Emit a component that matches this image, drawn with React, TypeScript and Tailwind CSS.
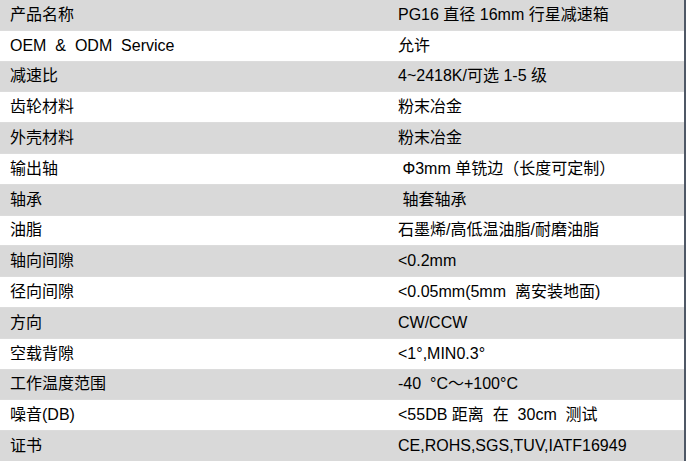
const ROWS: [string, string][] = [
  ["产品名称", "PG16 直径 16mm 行星减速箱"],
  ["OEM  &  ODM  Service", "允许"],
  ["减速比", "4~2418K/可选 1-5 级"],
  ["齿轮材料", "粉末冶金"],
  ["外壳材料", "粉末冶金"],
  ["输出轴", " Φ3mm 单铣边（长度可定制）"],
  ["轴承", " 轴套轴承"],
  ["油脂", "石墨烯/高低温油脂/耐磨油脂"],
  ["轴向间隙", "<0.2mm"],
  ["径向间隙", "<0.05mm(5mm  离安装地面)"],
  ["方向", "CW/CCW"],
  ["空载背隙", "<1°,MIN0.3°"],
  ["工作温度范围", "-40  °C～+100°C"],
  ["噪音(DB)", "<55DB 距离  在  30cm  测试"],
  ["证书", "CE,ROHS,SGS,TUV,IATF16949"],
];

export default function App() {
  return (
    <div
      className="flex h-[461px] w-[686px] bg-white text-[16px] text-black"
      style={{ fontFamily: '"Liberation Sans", Arial, "Noto Sans CJK SC", sans-serif' }}
    >
      <div className="flex flex-1 flex-col">
        {ROWS.map(([k, v], i) => (
          <div
            key={k}
            className={`flex flex-1 items-center whitespace-pre ${
              i % 2 === 0 ? "bg-[#d9d9d9]" : "bg-white"
            } ${i > 0 ? "border-t border-[#dcdcdc]" : ""}`}
          >
            <div className="w-[398px] pl-[10px]">{k}</div>
            <div className="flex-1">{v}</div>
          </div>
        ))}
      </div>
      <div className="w-[2px] bg-[#4f5866]" />
    </div>
  );
}
